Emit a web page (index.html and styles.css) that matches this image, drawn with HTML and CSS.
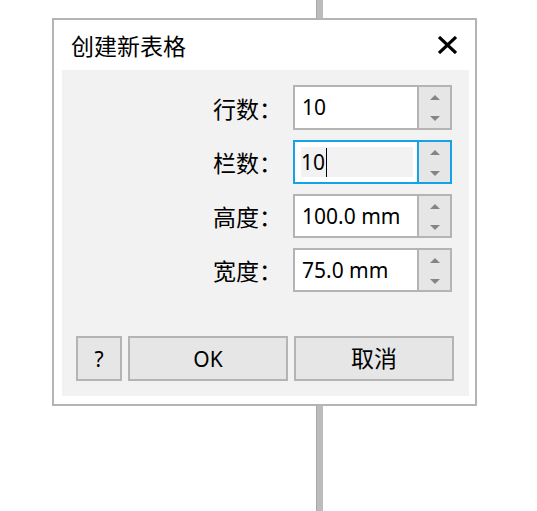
FILE: index.html
```html
<!DOCTYPE html>
<html lang="zh-CN">
<head>
<meta charset="utf-8">
<title>创建新表格</title>
<link rel="stylesheet" href="styles.css">
</head>
<body>
<div class="guide"></div>
<div class="dialog">
  <div class="titlebar">
    <span class="title">创建新表格</span>
    <svg class="close" width="19" height="18" viewBox="0 0 19 18"><path d="M1 1 L18 17 M18 1 L1 17" stroke="#000" stroke-width="3.2" fill="none"/></svg>
  </div>
  <div class="panel">
    <div class="form">
      <label class="label">行数：</label>
      <div class="spin"><div class="field">10</div><div class="arrows"><span class="up"></span><span class="down"></span></div></div>
      <label class="label">栏数：</label>
      <div class="spin focus"><div class="field"><span class="edit">10<span class="caret"></span></span></div><div class="arrows"><span class="up"></span><span class="down"></span></div></div>
      <label class="label">高度：</label>
      <div class="spin"><div class="field">100.0 mm</div><div class="arrows"><span class="up"></span><span class="down"></span></div></div>
      <label class="label">宽度：</label>
      <div class="spin"><div class="field">75.0 mm</div><div class="arrows"><span class="up"></span><span class="down"></span></div></div>
    </div>
    <div class="buttons">
      <button class="btn help">?</button>
      <button class="btn wide">OK</button>
      <button class="btn wide cjk">取消</button>
    </div>
  </div>
</div>
</body>
</html>
```
FILE: styles.css
```css
html, body {
  margin: 0;
  padding: 0;
  background: #ffffff;
  width: 537px;
  height: 511px;
  overflow: hidden;
  font-family: "Noto Sans", "Noto Sans CJK SC", sans-serif;
  color: #000;
}
body {
  position: relative;
  padding: 18px 0 0 52px;
  box-sizing: border-box;
}
.guide {
  position: absolute;
  left: 316px;
  top: 0;
  width: 6px;
  height: 511px;
  background: #bcbcbc;
  border-left: 1px solid #a9a9a9;
}
.dialog {
  position: relative;
  z-index: 1;
  width: 425px;
  height: 388px;
  box-sizing: border-box;
  border: 2px solid #b4b4b4;
  background: #ffffff;
  display: flex;
  flex-direction: column;
}
.titlebar {
  height: 50px;
  display: flex;
  align-items: center;
  justify-content: space-between;
  padding: 0 18px 0 17px;
}
.title {
  font-family: "Noto Sans CJK SC", sans-serif;
  font-size: 23px;
  line-height: 1;
  margin-top: 1px;
}
.close {
  display: block;
  margin-top: 0;
}
.panel {
  flex: 1;
  margin: 0 6px 8px 8px;
  background: #f2f2f2;
  display: flex;
  flex-direction: column;
  justify-content: space-between;
  padding: 15px 15px 15px 14px;
}
.form {
  display: grid;
  grid-template-columns: 1fr 159px;
  grid-template-rows: 45px 44px 44px 44px;
  row-gap: 10px;
  column-gap: 11px;
  padding-right: 2px;
}
.label {
  font-family: "Noto Sans CJK SC", sans-serif;
  font-size: 23px;
  text-align: right;
  align-self: center;
  line-height: 1;
  margin-top: 1px;
}
.spin {
  display: flex;
  box-sizing: border-box;
  border: 2px solid #b4b4b4;
  background: #ffffff;
}
.spin.focus {
  border-color: #15a2e6;
}
.field {
  flex: 1;
  display: flex;
  align-items: center;
  padding-left: 7px;
  font-size: 21px;
  line-height: 1;
}
.focus .field {
  padding: 5px 4px 5px 6px;
}
.edit {
  flex: 1;
  align-self: stretch;
  display: flex;
  align-items: center;
  background: #f2f2f2;
  padding-left: 0;
}
.caret {
  display: inline-block;
  width: 1px;
  height: 29px;
  background: #000;
  margin-left: 1px;
}
.arrows {
  width: 31px;
  border-left: 2px solid #b4b4b4;
  background: #e6e6e6;
  display: flex;
  flex-direction: column;
}
.focus .arrows {
  border-left-color: #15a2e6;
}
.arrows span {
  flex: 1;
  display: flex;
  align-items: center;
  justify-content: center;
}
.arrows .up::before {
  content: "";
  border-left: 5px solid transparent;
  border-right: 5px solid transparent;
  border-bottom: 5px solid #858585;
  margin-top: 1px;
}
.arrows .down::before {
  content: "";
  border-left: 5px solid transparent;
  border-right: 5px solid transparent;
  border-top: 5px solid #858585;
  margin-bottom: -2px;
}
.buttons {
  display: flex;
  gap: 6px;
  height: 45px;
}
.btn {
  box-sizing: border-box;
  height: 45px;
  border: 2px solid #b4b4b4;
  background: #e6e6e6;
  font-family: "Noto Sans", "Noto Sans CJK SC", sans-serif;
  font-size: 21px;
  color: #000;
  padding: 0;
  margin: 0;
}
.btn.cjk {
  font-family: "Noto Sans CJK SC", sans-serif;
  font-size: 23px;
  line-height: 1;
  padding-bottom: 3px;
}
.help {
  width: 46px;
}
.wide {
  width: 160px;
}
```
